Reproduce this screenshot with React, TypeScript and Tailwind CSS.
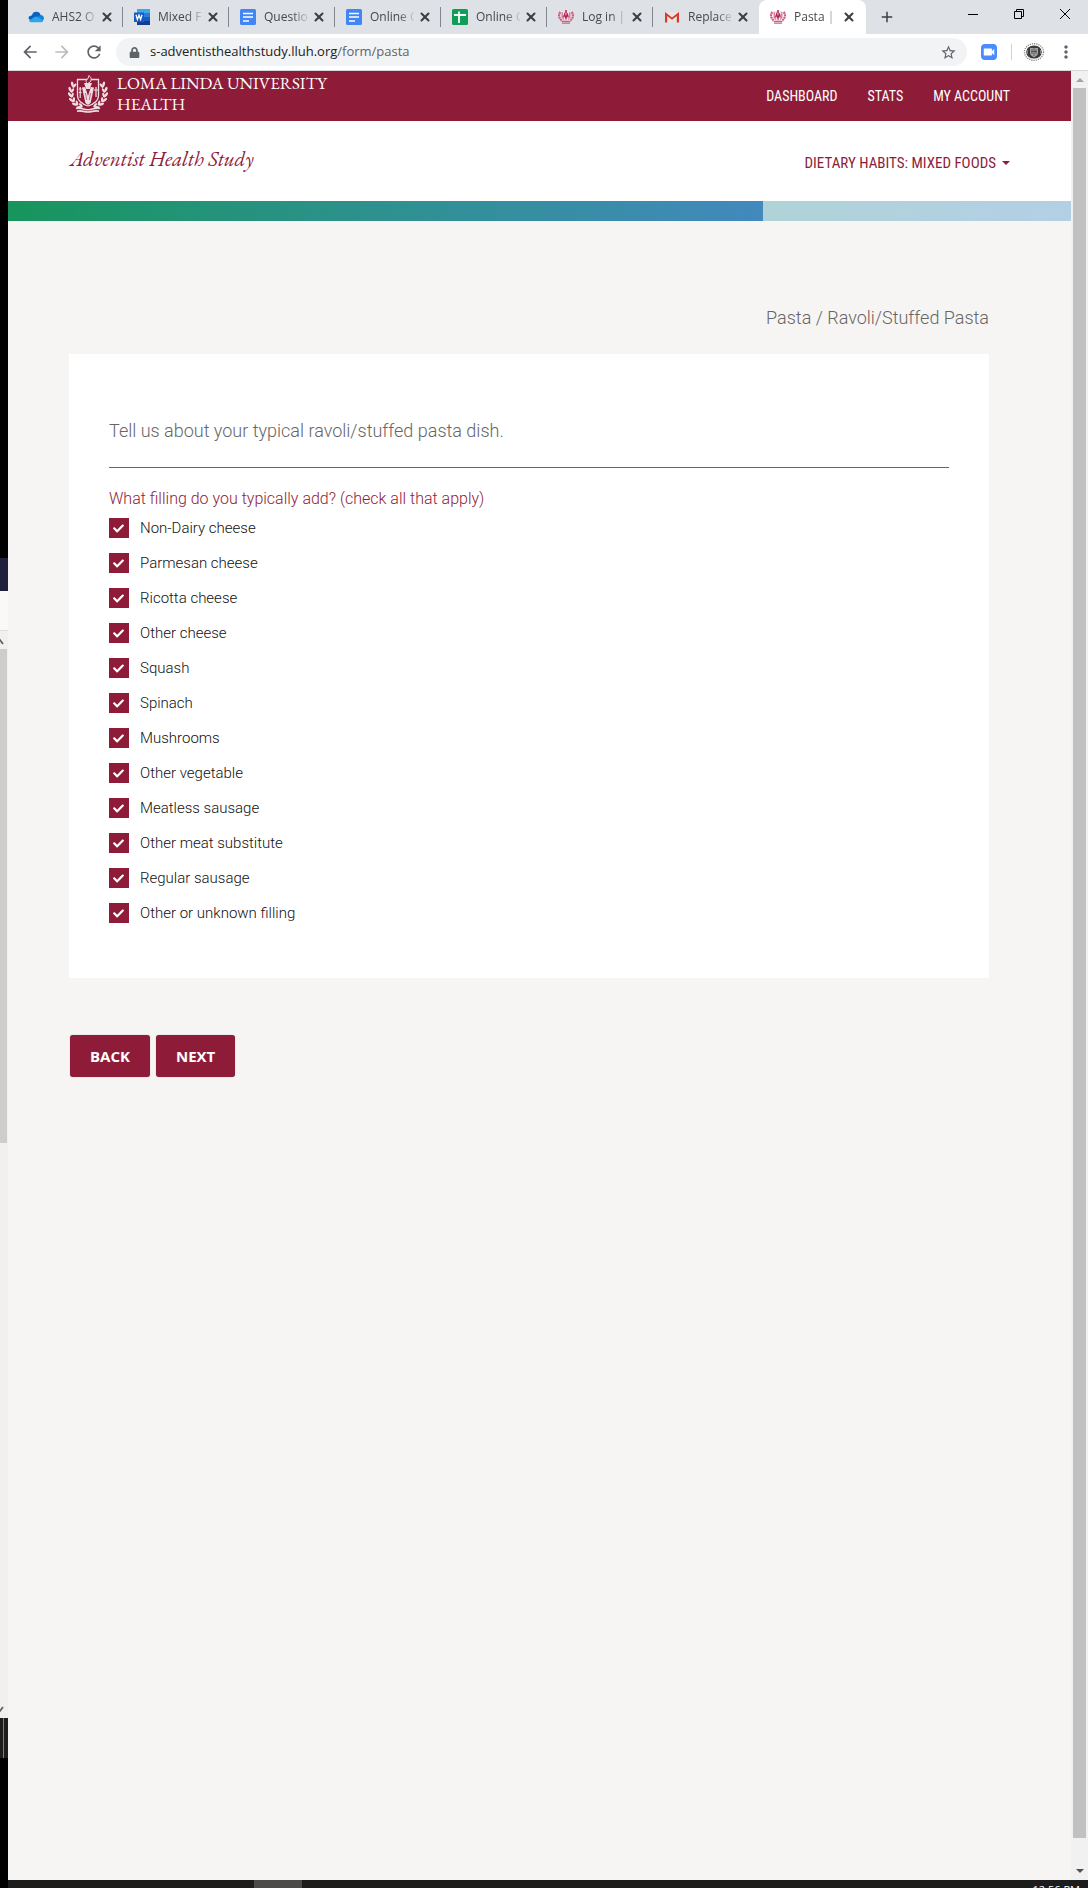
import React from "react";
import { FaCheck, FaLock } from "react-icons/fa";
import { MdArrowBack, MdArrowForward, MdRefresh, MdStarBorder, MdMoreVert, MdVideocam, MdAdd } from "react-icons/md";
import { X } from "lucide-react";

const fillings = [
  "Non-Dairy cheese",
  "Parmesan cheese",
  "Ricotta cheese",
  "Other cheese",
  "Squash",
  "Spinach",
  "Mushrooms",
  "Other vegetable",
  "Meatless sausage",
  "Other meat substitute",
  "Regular sausage",
  "Other or unknown filling",
];

function Crest({ className, color, cut }: { className: string; color: string; cut: string }) {
  const leaves = [
    [5.5, 9, -15],
    [3.2, 14, -5],
    [2.8, 19, 10],
    [4, 24, 25],
    [7, 28, 45],
    [11, 31, 65],
  ];
  const branch = (
    <g fill={color}>
      {leaves.map(([x, y, r]) => (
        <g key={y} transform={`translate(${x} ${y}) rotate(${-r})`}>
          <ellipse cx="-1.2" cy="0" rx="1.3" ry="2.8" transform="rotate(-28)" />
          <ellipse cx="1.9" cy="0.6" rx="1.2" ry="2.6" transform="rotate(28)" />
        </g>
      ))}
    </g>
  );
  return (
    <svg viewBox="0 0 40 38" className={className} aria-hidden="true">
      {branch}
      <g transform="translate(40 0) scale(-1 1)">{branch}</g>
      <path d="M9.500 4.500h21v16c0 5-4.500 8.500-10.500 10.500-6-2-10.500-5.500-10.500-10.500z" fill={cut} stroke={color} strokeWidth="1.300" />
      <path d="M14 12.500 17.200 12l2.800 9 2.800-9 3.200.5-3.400 15.500L20 30l-2.600-2z" fill={color} />
      <path d="M16 8h8l-2.200 6h-3.600z" fill={color} />
      <path d="M17.500 18l1.200 7M22.500 18l-1.200 7" stroke={cut} strokeWidth="0.6" />
      <path d="M19.500 8.500c-4-3 1.500-3.800 1.300-8 3.700 2.600 3 6.500-1.300 8z" fill={cut} stroke={color} strokeWidth="1" />
      <path d="M12.200 12v11M10.800 14h2.800M10.800 17.500h2.800M28 12v10M26 15h4" stroke={color} strokeWidth="1.200" fill="none" />
      <path d="M8 33.500c4-1.500 7 1.200 12 1.200s8-2.700 12-1.200M9 36.200c4-1.200 7 .8 11 .8s7-2 11-.8" stroke={color} strokeWidth="1.600" fill="none" />
    </svg>
  );
}

function DocsIcon() {
  return (
    <svg viewBox="0 0 16 16" className="size-4" aria-hidden="true">
      <rect width="16" height="16" rx="1.500" fill="#4285f4" />
      <path d="M3 4.500h10M3 8h10M3 12h6" stroke="#fff" strokeWidth="1.600" />
    </svg>
  );
}

function OneDriveIcon() {
  return (
    <svg viewBox="0 0 16 16" className="size-4" aria-hidden="true">
      <path d="M4 6.200A4.400 4.400 0 0 1 12.600 6.200L9 11H2.500A2.500 2.500 0 0 1 1 7.500z" fill="#0a62c0" />
      <path d="M8 8l4.500-1.900A3.700 3.700 0 0 1 15.900 10l-2 3z" fill="#1580d8" />
      <path d="M1 11.500 7.500 7.600c4 1.200 6 2.600 7.700 4.700-.5.600-1.300.9-2 .9H3c-.9 0-1.700-.8-2-1.700z" fill="#28a8ea" />
    </svg>
  );
}

function WordIcon() {
  return (
    <svg viewBox="0 0 16 16" className="size-4" aria-hidden="true">
      <path d="M3 0h13v4H3z" fill="#41a5ee" />
      <path d="M3 4h13v4H3z" fill="#2b7cd3" />
      <path d="M3 8h13v4H3z" fill="#185abd" />
      <path d="M3 12h13v4H3z" fill="#103f91" />
      <rect y="3.500" width="10" height="9.500" fill="#185abd" />
      <path d="M2 5.800 3.400 10.500 5 6.200l1.600 4.300L8 5.800" fill="none" stroke="#fff" strokeWidth="1.300" />
    </svg>
  );
}

function SheetsIcon() {
  return (
    <svg viewBox="0 0 16 16" className="size-4" aria-hidden="true">
      <rect width="16" height="16" rx="1.500" fill="#0f9d58" />
      <path d="M2 6h12M7 2.500V14" stroke="#fff" strokeWidth="1.800" />
    </svg>
  );
}

function GmailIcon() {
  return (
    <svg viewBox="0 0 16 16" className="size-4" aria-hidden="true">
      <path d="M2 3h12v10H2z" fill="#e8e6e4" />
      <path d="M1 13.500V3l7 5.500L15 3v10.500h-2.200V7L8 10.700 3.200 7v6.500z" fill="#d93a2b" />
    </svg>
  );
}

function Favicon() {
  return (
    <svg viewBox="0 0 16 16" className="size-4" fill="none" aria-hidden="true">
      <path d="M3.500 2h9v6.500c0 2-2 3-4.500 4-2.500-1-4.500-2-4.500-4z" fill="#f6e3ea" />
      <path d="M2.300 3C.4 5.500.4 8.500 3.600 11.300M13.700 3c1.900 2.500 1.900 5.500-1.300 8.300" stroke="#cf5f85" strokeWidth="2.200" strokeDasharray="2 .5" />
      <path d="M4.200 3.200v5.600L6 10.500M11.800 3.200v5.600L10 10.500" stroke="#c2476f" strokeWidth=".9" />
      <path d="M5.500 8.500 6.700 5 8 9.500 9.300 4.500l1 4" stroke="#b01f4d" strokeWidth="1.200" />
      <path d="M8 4.500V1" stroke="#b01f4d" strokeWidth="1.500" />
      <path d="M3.500 12.400h9M4 14.200h8" stroke="#cf5f85" strokeWidth="1.300" />
    </svg>
  );
}

function Avatar() {
  return (
    <svg viewBox="0 0 22 20" className="h-5 w-[22px]" fill="none" aria-hidden="true">
      <ellipse cx="11" cy="10" rx="9.500" ry="8.300" stroke="#8a8a8a" strokeWidth="1.400" strokeDasharray="1.200 1" />
      <ellipse cx="11" cy="10" rx="7.800" ry="6.600" fill="#3a3a3a" />
      <path d="M7 6h8v5c0 2-2 3.500-4 4.200C9 14.500 7 13 7 11z" fill="#a5a5a5" />
      <path d="M9 7v5M11 5v9M13 7v5M8 9.500h6" stroke="#4a4a4a" strokeWidth=".8" />
      <path d="M4.500 8v4M17.500 8v4" stroke="#909090" strokeWidth=".8" />
    </svg>
  );
}

const tabs = [
  { title: "AHS2 O", icon: <OneDriveIcon /> },
  { title: "Mixed F", icon: <WordIcon /> },
  { title: "Questio", icon: <DocsIcon /> },
  { title: "Online C", icon: <DocsIcon /> },
  { title: "Online C", icon: <SheetsIcon /> },
  { title: "Log in |", icon: <Favicon /> },
  { title: "Replace", icon: <GmailIcon /> },
  { title: "Pasta | A", icon: <Favicon /> },
];

function TabStrip() {
  return (
    <div className="flex h-[34px] bg-[#dee1e6] pl-[9px]">
      {tabs.map((tab, i) => {
        const active = i === tabs.length - 1;
        return (
          <div
            key={i}
            className={
              active
                ? "flex w-[107px] shrink-0 items-center rounded-t-lg bg-white pl-[11px]"
                : "flex w-[106px] shrink-0 items-center pl-[11px]"
            }
          >
            {tab.icon}
            <span className="ml-2 w-11 whitespace-nowrap text-[12px] text-[#45494d] [mask-image:linear-gradient(to_right,#000_65%,transparent_105%)]">
              {tab.title}
            </span>
            <button aria-label="Close tab" className="ml-1 text-[#3c4043]">
              <X className="size-3.5" strokeWidth={3.5} />
            </button>
            {!active && i !== tabs.length - 2 && <span className="ml-auto h-5 w-px bg-[#80868b]" />}
          </div>
        );
      })}
      <button aria-label="New tab" className="ml-3 flex items-center text-[#3c4043]">
        <MdAdd className="size-[18px]" />
      </button>
      <div className="ml-auto flex h-7 text-black">
        <button aria-label="Minimize" className="flex w-[46px] items-center justify-center">
          <span className="h-px w-2.5 bg-black" />
        </button>
        <button aria-label="Restore" className="flex w-[46px] items-center justify-center">
          <svg viewBox="0 0 10 10" className="size-2.5" fill="none" stroke="#000">
            <path d="M.5 2.500h7v7h-7zM2.500 2.500v-2h7v7h-2" />
          </svg>
        </button>
        <button aria-label="Close" className="flex w-[46px] items-center justify-center">
          <svg viewBox="0 0 10 10" className="size-2.5" fill="none" stroke="#000">
            <path d="M0 0 10 10M10 0 0 10" />
          </svg>
        </button>
      </div>
    </div>
  );
}

function Toolbar() {
  return (
    <div className="flex h-[37px] items-center border-b border-[#d5d7da] bg-white pl-3 text-[#5f6368]">
      <button aria-label="Back" className="mr-3"><MdArrowBack className="size-5" /></button>
      <button aria-label="Forward" className="mr-3 text-[#babcbe]"><MdArrowForward className="size-5" /></button>
      <button aria-label="Reload" className="mr-3"><MdRefresh className="size-5" /></button>
      <div className="flex h-7 grow items-center rounded-full bg-[#f1f3f4] pr-2.5 pl-[13px]">
        <FaLock className="size-[11px]" />
        <div className="ml-2.5 grow text-[13px]">
          <span className="text-[#202124]">s-adventisthealthstudy.lluh.org</span>/form/pasta
        </div>
        <button aria-label="Bookmark this page"><MdStarBorder className="size-[17px]" /></button>
      </div>
      <button aria-label="Zoom" className="ml-3.5 flex size-4 items-center justify-center rounded bg-[#4a8cff] text-white">
        <MdVideocam className="size-3.5" />
      </button>
      <span className="ml-3.5 h-4 w-px bg-[#cfd1d4]" />
      <button aria-label="Profile" className="ml-[11px]">
        <Avatar />
      </button>
      <button aria-label="Menu" className="mr-3 ml-[11px]"><MdMoreVert className="size-5" /></button>
    </div>
  );
}

function SiteHeader() {
  return (
    <header>
      <div className="flex h-[50px] items-center justify-between bg-[#8e1c39] pr-[61px] pl-[60px] text-white">
        <a href="#home" className="flex items-center gap-[9px] pb-1">
          <Crest className="h-[38px] w-10" color="#f0dde2" cut="#8e1c39" />
          <span className="font-['EB_Garamond','Liberation_Serif',serif] text-[17px] leading-[21px]">
            LOMA LINDA UNIVERSITY
            <br />
            HEALTH
          </span>
        </a>
        <nav className="flex gap-[30px] font-['Liberation_Sans_Narrow','Roboto_Condensed',Roboto,sans-serif] text-[14px]">
          <a href="#dashboard">DASHBOARD</a>
          <a href="#stats">STATS</a>
          <a href="#account">MY ACCOUNT</a>
        </nav>
      </div>
      <div className="flex h-20 items-center justify-between bg-white pr-[61px] pl-[62px] text-[#8e1c39]">
        <a href="#study" className="pb-1 font-['EB_Garamond','Liberation_Serif',serif] text-[21px] italic">
          Adventist Health Study
        </a>
        <button className="flex items-center gap-1.5 pt-1 font-['Liberation_Sans_Narrow','Roboto_Condensed',Roboto,sans-serif] text-[15px]">
          DIETARY HABITS: MIXED FOODS
          <span className="border-x-4 border-t-4 border-x-transparent border-t-[#8e1c39]" />
        </button>
      </div>
      <div className="flex h-5">
        <div className="w-[71%] bg-linear-to-r from-[#17955c] to-[#4289bd]" />
        <div className="grow bg-linear-to-r from-[#afd3d7] to-[#b3cfe5]" />
      </div>
    </header>
  );
}

function FormPage() {
  return (
    <main className="grow pr-[82px] pl-[61px] font-['Roboto','Liberation_Sans',sans-serif] font-light">
      <p className="pt-[83px] text-right text-[18px] leading-7 text-[#666]">Pasta / Ravoli/Stuffed Pasta</p>
      <section className="mt-[22px] bg-white px-10 pt-[63px] pb-[55px]">
        <h1 className="border-b border-[#666] pb-[22px] text-[18px] leading-7 text-[#666]">
          Tell us about your typical ravoli/stuffed pasta dish.
        </h1>
        <fieldset className="pt-[17px]">
          <legend className="float-left mb-[5px] w-full text-[16px] leading-7 text-[#8e1c39]">
            What filling do you typically add? (check all that apply)
          </legend>
          <div className="clear-both flex flex-col items-start gap-[15px]">
            {fillings.map((name) => (
              <label key={name} className="flex h-5 items-center text-[15px] text-[#111]">
                <span className="relative mr-[11px] size-5">
                  <input type="checkbox" defaultChecked className="peer block size-5 appearance-none border border-[#8e1c39] checked:bg-[#8e1c39]" />
                  <FaCheck className="pointer-events-none absolute top-[5px] left-[4px] hidden size-[11px] text-white peer-checked:block" />
                </span>
                {name}
              </label>
            ))}
          </div>
        </fieldset>
      </section>
      <div className="mt-[57px] flex gap-1.5 px-px font-['Open_Sans',sans-serif] text-[15px] font-bold text-white">
        <button className="h-[42px] rounded-[3px] bg-[#8e1c39] px-5 shadow-[0_0_1px_#888]">BACK</button>
        <button className="h-[42px] rounded-[3px] bg-[#8e1c39] px-5 shadow-[0_0_1px_#888]">NEXT</button>
      </div>
    </main>
  );
}

function LeftEdge() {
  return (
    <aside className="flex w-2 shrink-0 flex-col bg-black" aria-hidden="true">
      <div className="h-[558px]" />
      <div className="h-[33px] bg-[#1f203e]" />
      <div className="h-10 border-b border-[#ddd] bg-[#f9f9f9]" />
      <div className="flex h-[1087px] flex-col justify-between bg-[#f0f0f0]">
        <div>
          <svg viewBox="0 0 8 18" className="h-[18px] w-2"><path d="M-4 13 0 9l3 4" fill="none" stroke="#606060" strokeWidth="1.800" /></svg>
          <div className="h-[494px] w-[7px] bg-[#cdcdcd]" />
        </div>
        <svg viewBox="0 0 8 18" className="h-[18px] w-2"><path d="M-4 7 0 11l3-4" fill="none" stroke="#606060" strokeWidth="1.800" /></svg>
      </div>
      <div className="h-10 bg-[#1d1d1d] pl-[3px]"><div className="h-10 w-px bg-[#808080]" /></div>
    </aside>
  );
}

function ScrollBar() {
  return (
    <div className="flex w-[17px] shrink-0 flex-col items-center bg-[#f1f1f1]" aria-hidden="true">
      <div className="flex h-[17px] items-center"><span className="border-x-4 border-b-4 border-x-transparent border-b-[#a3a3a3]" /></div>
      <div className="w-[13px] grow bg-[#c1c1c1]" />
      <div className="flex h-[42px] items-end pb-[7px]"><span className="border-x-4 border-t-4 border-x-transparent border-t-[#505050]" /></div>
    </div>
  );
}

export default function App() {
  return (
    <div className="flex h-screen w-full overflow-hidden font-['Open_Sans',sans-serif]">
      <LeftEdge />
      <div className="flex min-w-0 grow flex-col">
        <TabStrip />
        <Toolbar />
        <div className="flex min-h-0 grow">
          <div className="flex min-w-0 grow flex-col bg-[#f6f5f3]">
            <SiteHeader />
            <FormPage />
          </div>
          <ScrollBar />
        </div>
        <footer className="flex h-2 shrink-0 justify-between overflow-hidden bg-[#1c1c1c] pl-[246px]">
          <span className="h-2 w-12 bg-[#4a4a4a]" />
          <span className="pt-[2px] pr-2 text-[11px] leading-4 text-white">12:56 PM</span>
        </footer>
      </div>
    </div>
  );
}
